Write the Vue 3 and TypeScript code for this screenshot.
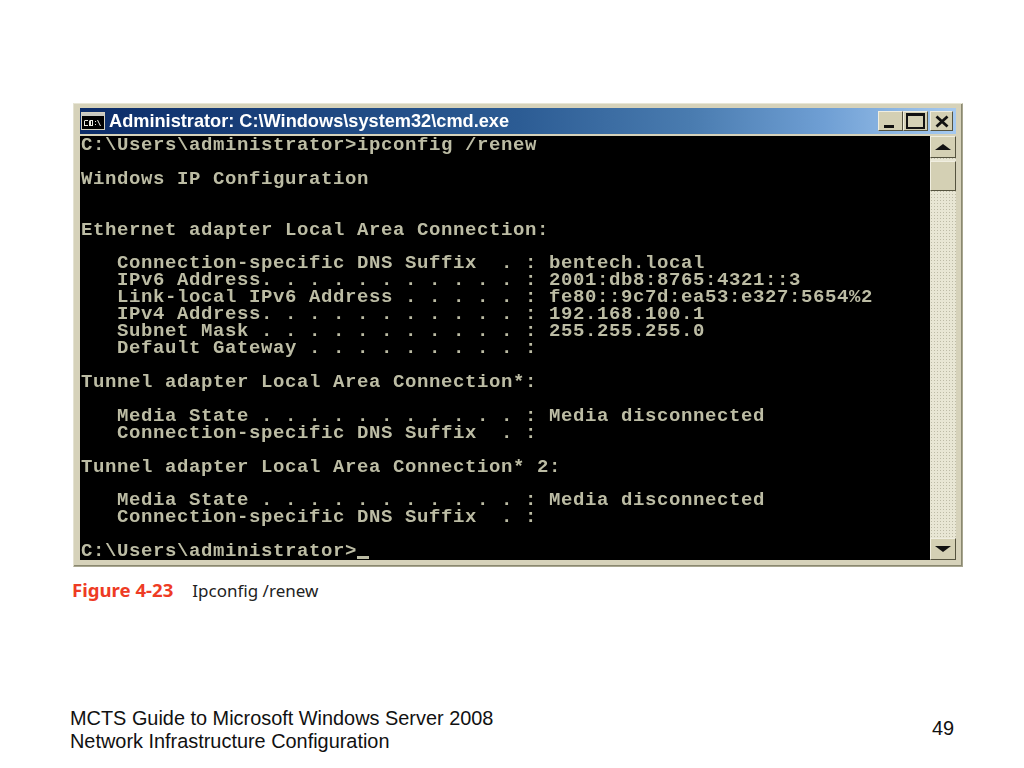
<script setup lang="ts">
const output: string = [
  'C:\\Users\\administrator>ipconfig /renew',
  '',
  'Windows IP Configuration',
  '',
  '',
  'Ethernet adapter Local Area Connection:',
  '',
  '   Connection-specific DNS Suffix  . : bentech.local',
  '   IPv6 Address. . . . . . . . . . . : 2001:db8:8765:4321::3',
  '   Link-local IPv6 Address . . . . . : fe80::9c7d:ea53:e327:5654%2',
  '   IPv4 Address. . . . . . . . . . . : 192.168.100.1',
  '   Subnet Mask . . . . . . . . . . . : 255.255.255.0',
  '   Default Gateway . . . . . . . . . :',
  '',
  'Tunnel adapter Local Area Connection*:',
  '',
  '   Media State . . . . . . . . . . . : Media disconnected',
  '   Connection-specific DNS Suffix  . :',
  '',
  'Tunnel adapter Local Area Connection* 2:',
  '',
  '   Media State . . . . . . . . . . . : Media disconnected',
  '   Connection-specific DNS Suffix  . :',
  '',
  'C:\\Users\\administrator>',
].join('\n')
</script>

<template>
  <div class="slide">
    <div class="window">
      <div class="titlebar">
        <svg class="app-icon" width="24" height="18" viewBox="0 0 24 18">
          <rect x="0.5" y="0.5" width="23" height="17" fill="#000" stroke="#d4d0c0" />
          <rect x="1" y="1" width="22" height="3" fill="#c8c8c0" />
          <path d="M4 8h3v1H4v4h3v1H3V9zM9 8h3v6H8V9zM10 9v4h1V9zM14 9h1v1h-1zM14 12h1v1h-1zM17 8l3 6h-1l-3-6z" fill="#e8e8e0" />
        </svg>
        <span class="title">Administrator: C:\Windows\system32\cmd.exe</span>
        <div class="controls">
          <button class="ctl" aria-label="Minimize"><i class="min"></i></button>
          <button class="ctl" aria-label="Maximize"><i class="max"></i></button>
          <button class="ctl close" aria-label="Close">
            <svg width="16" height="13" viewBox="0 0 16 13"><path d="M2.5 1.5l11 10M13.5 1.5l-11 10" stroke="#111" stroke-width="2.8" fill="none" /></svg>
          </button>
        </div>
      </div>
      <div class="body">
        <div class="console">
          <pre class="text">{{ output }}<span class="cursor"></span></pre>
        </div>
        <div class="scrollbar">
          <div class="arrow"><i class="up"></i></div>
          <div class="thumb"></div>
          <div class="track"></div>
          <div class="arrow"><i class="down"></i></div>
        </div>
      </div>
    </div>

    <p class="caption"><b>Figure 4-23</b><span>Ipconfig /renew</span></p>

    <footer class="footer">
      <div>MCTS Guide to Microsoft Windows Server 2008<br />Network Infrastructure Configuration</div>
      <div class="page">49</div>
    </footer>
  </div>
</template>

<style>
html, body { margin: 0; background: #fff; }
</style>

<style scoped>
.slide {
  width: 1024px;
  height: 768px;
  box-sizing: border-box;
  padding: 103px 61px 15px 70px;
  display: flex;
  flex-direction: column;
  background: #fff;
  overflow: hidden;
}
.window {
  margin-left: 3px;
  height: 464px;
  flex: none;
  box-sizing: border-box;
  padding: 4px 6px 6px 6px;
  background: #d6d2ba;
  border: 1px solid #a8a690;
  border-top-color: #e8e6d6;
  border-left-color: #e4e2d2;
  box-shadow: inset -1px -1px 0 #8a8870;
  display: flex;
  flex-direction: column;
  filter: blur(0.45px);
}
.titlebar {
  height: 26px;
  margin-bottom: 2px;
  flex: none;
  display: flex;
  align-items: center;
  background: linear-gradient(90deg, #0c2c68 0%, #2c5c94 50%, #4a7cb0 70%, #6f9fd4 85%, #a6caf0 100%);
}
.app-icon { margin-left: 1px; flex: none; }
.title {
  margin-left: 4px;
  font: bold 18.2px/24px "Liberation Sans", sans-serif;
  color: #fff;
  white-space: nowrap;
}
.controls { margin-left: auto; margin-right: 3px; display: flex; }
.ctl {
  width: 25px;
  height: 20px;
  padding: 0;
  background: #d4d0b4;
  border: 1px solid;
  border-color: #f0eee0 #55533f #55533f #f0eee0;
  display: flex;
  align-items: center;
  justify-content: center;
}
.close { width: 23px; margin-left: 2px; }
.min { width: 10px; height: 3px; background: #111; align-self: flex-end; margin: 0 4px 2px 0; }
.max { width: 15px; height: 11px; border: 2px solid #111; border-top-width: 3px; box-sizing: content-box; }
.body { flex: 1; display: flex; min-height: 0; }
.console { flex: 1; background: #000; min-width: 0; padding: 0 0 0 1px; }
.text {
  margin: 0;
  padding-top: 1px;
  font: bold 19px/16.92px "Liberation Mono", monospace;
  letter-spacing: 0.6px;
  color: #bcbca4;
  white-space: pre;
}
.cursor {
  display: inline-block;
  width: 12px;
  height: 3px;
  background: #bcbca4;
  vertical-align: -3px;
}
.scrollbar {
  width: 26px;
  flex: none;
  display: flex;
  flex-direction: column;
  background-color: #e8e6d4;
  background-image: radial-gradient(#bdbba6 0.6px, transparent 0.8px);
  background-size: 3px 3px;
}
.arrow, .thumb {
  background: #d4d0b4;
  border: 1px solid;
  border-color: #f0eee0 #55533f #55533f #f0eee0;
  box-sizing: border-box;
  flex: none;
}
.arrow { height: 22px; display: flex; align-items: center; justify-content: center; }
.up { border: 6px solid transparent; border-top: 0; border-bottom: 6px solid #111; border-left-width: 8px; border-right-width: 8px; }
.down { border: 6px solid transparent; border-bottom: 0; border-top: 6px solid #111; border-left-width: 8px; border-right-width: 8px; }
.thumb { height: 30px; margin-top: 3px; }
.track { flex: 1; }
.caption {
  margin: 12px 0 0 2px;
  font: 17px/22px "Noto Sans", sans-serif;
  color: #222;
  white-space: nowrap;
}
.caption b { font: bold 18.6px/22px "Noto Sans", sans-serif; color: #ee3b24; margin-right: 19px; }
.footer {
  margin-top: auto;
  display: flex;
  justify-content: space-between;
  font: 19.9px/23px "Liberation Sans", sans-serif;
  color: #111;
}
.page { margin-top: 10px; margin-right: 9px; }
</style>
